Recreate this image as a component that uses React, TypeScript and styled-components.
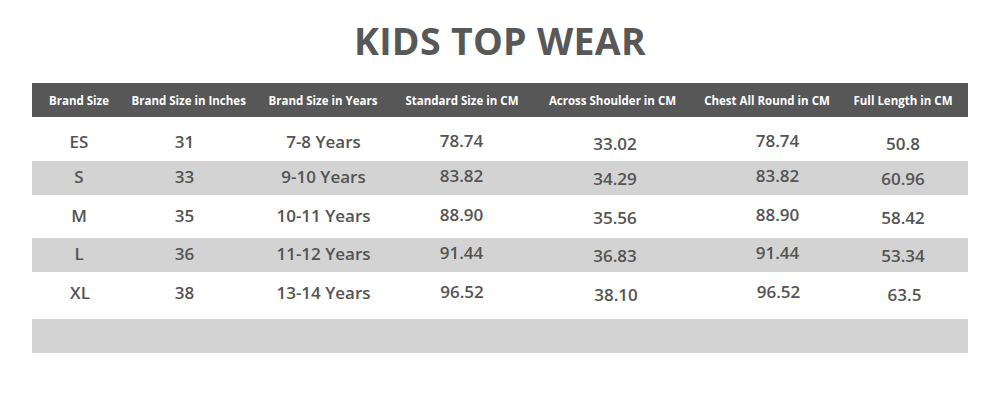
import React from "react";
import styled, { createGlobalStyle } from "styled-components";

const Global = createGlobalStyle`
  html, body { margin: 0; padding: 0; background: #ffffff; }
  body { font-family: "Open Sans", "Liberation Sans", sans-serif; }
`;

const Page = styled.div`
  width: 1000px;
  height: 400px;
  display: flex;
  flex-direction: column;
  align-items: center;
  box-sizing: border-box;
  padding-top: 18px;
`;

const Title = styled.h1`
  margin: 0;
  font-family: "Open Sans", "Liberation Sans", sans-serif;
  font-weight: 700;
  font-size: 37.5px;
  line-height: 46px;
  color: #585858;
  letter-spacing: 0.3px;
`;

const Table = styled.div`
  margin-top: 19px;
  margin-left: -1px;
  width: 936px;
  display: flex;
  flex-direction: column;
`;

const COLS = "100px 122px 139px 145px 152px 146px 132px";

const HeaderRow = styled.div`
  display: grid;
  grid-template-columns: ${COLS};
  height: 34px;
  background: #575757;
  align-items: center;
`;

const nudge = (dx: number) =>
  dx >= 0 ? `padding-left: ${dx * 2}px;` : `padding-right: ${-dx * 2}px;`;

const HeadCell = styled.div<{ $dx: number }>`
  text-align: center;
  color: #ffffff;
  font-weight: 700;
  font-size: 11.5px;
  white-space: nowrap;
  ${(p) => nudge(p.$dx)}
`;

const Row = styled.div<{ $h: number; $pad: number; $shade: boolean }>`
  display: grid;
  grid-template-columns: ${COLS};
  height: ${(p) => p.$h}px;
  box-sizing: border-box;
  padding-top: ${(p) => p.$pad}px;
  background: ${(p) => (p.$shade ? "#d3d3d3" : "#ffffff")};
  align-items: start;
`;

const Cell = styled.div<{ $dy: number; $dx: number }>`
  text-align: center;
  color: #545454;
  font-weight: 600;
  font-size: 17px;
  line-height: 20px;
  margin-top: ${(p) => p.$dy}px;
  white-space: nowrap;
  ${(p) => nudge(p.$dx)}
`;

const headers = [
  "Brand Size",
  "Brand Size in Inches",
  "Brand Size in Years",
  "Standard Size in CM",
  "Across Shoulder in CM",
  "Chest All Round in CM",
  "Full Length in CM",
];
const headerDx = [-2.5, -8, 0, -3, -1, 4.5, 1.5];

const colShift = [0, 0, 0, -1, 2, -1, 2];
const colDx = [-2.5, -8, 0.5, -3.5, 1.5, 15, 1.5];

const rows: { h: number; pad: number; shade: boolean; cells: string[]; dx?: number[] }[] = [
  { h: 44, pad: 15, shade: false, cells: ["ES", "31", "7-8 Years", "78.74", "33.02", "78.74", "50.8"] },
  { h: 34, pad: 6, shade: true, cells: ["S", "33", "9-10 Years", "83.82", "34.29", "83.82", "60.96"] },
  { h: 43, pad: 11, shade: false, cells: ["M", "35", "10-11 Years", "88.90", "35.56", "88.90", "58.42"] },
  { h: 34, pad: 6, shade: true, cells: ["L", "36", "11-12 Years", "91.44", "36.83", "91.44", "53.34"] },
  { h: 47, pad: 11, shade: false, cells: ["XL", "38", "13-14 Years", "96.52", "38.10", "96.52", "63.5"], dx: [-1.5, -8, 0.5, -3, 2.5, 16, 3] },
  { h: 34, pad: 0, shade: true, cells: [] },
];

export default function App() {
  return (
    <>
      <Global />
      <Page>
        <Title>KIDS TOP WEAR</Title>
        <Table>
          <HeaderRow>
            {headers.map((h, j) => (
              <HeadCell key={h} $dx={headerDx[j]}>
                {h}
              </HeadCell>
            ))}
          </HeaderRow>
          {rows.map((r, i) => (
            <Row key={i} $h={r.h} $pad={r.pad} $shade={r.shade}>
              {r.cells.map((c, j) => (
                <Cell key={j} $dy={colShift[j]} $dx={(r.dx ?? colDx)[j]}>
                  {c}
                </Cell>
              ))}
            </Row>
          ))}
        </Table>
      </Page>
    </>
  );
}
